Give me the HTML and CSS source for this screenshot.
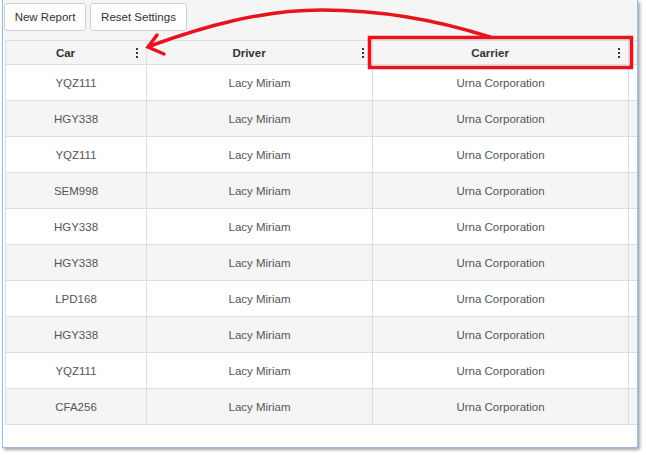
FILE: index.html
```html
<!DOCTYPE html>
<html>
<head>
<meta charset="utf-8">
<link rel="stylesheet" href="styles.css">
</head>
<body>
<div class="window">
  <div class="toolbar">
    <button class="btn">New Report</button>
    <button class="btn">Reset Settings</button>
  </div>
  <div class="grid">
    <div class="row head">
      <div class="hcell c1"><span class="htext">Car</span><span class="kebab"><i></i><i></i><i></i></span></div>
      <div class="hcell c2"><span class="htext">Driver</span><span class="kebab"><i></i><i></i><i></i></span></div>
      <div class="hcell c3"><span class="htext">Carrier</span><span class="kebab"><i></i><i></i><i></i></span></div>
      <div class="gutter"></div>
    </div>
    <div class="row"><div class="cell c1">YQZ111</div><div class="cell c2">Lacy Miriam</div><div class="cell c3">Urna Corporation</div><div class="gutter"></div></div>
    <div class="row alt"><div class="cell c1">HGY338</div><div class="cell c2">Lacy Miriam</div><div class="cell c3">Urna Corporation</div><div class="gutter"></div></div>
    <div class="row"><div class="cell c1">YQZ111</div><div class="cell c2">Lacy Miriam</div><div class="cell c3">Urna Corporation</div><div class="gutter"></div></div>
    <div class="row alt"><div class="cell c1">SEM998</div><div class="cell c2">Lacy Miriam</div><div class="cell c3">Urna Corporation</div><div class="gutter"></div></div>
    <div class="row"><div class="cell c1">HGY338</div><div class="cell c2">Lacy Miriam</div><div class="cell c3">Urna Corporation</div><div class="gutter"></div></div>
    <div class="row alt"><div class="cell c1">HGY338</div><div class="cell c2">Lacy Miriam</div><div class="cell c3">Urna Corporation</div><div class="gutter"></div></div>
    <div class="row"><div class="cell c1">LPD168</div><div class="cell c2">Lacy Miriam</div><div class="cell c3">Urna Corporation</div><div class="gutter"></div></div>
    <div class="row alt"><div class="cell c1">HGY338</div><div class="cell c2">Lacy Miriam</div><div class="cell c3">Urna Corporation</div><div class="gutter"></div></div>
    <div class="row"><div class="cell c1">YQZ111</div><div class="cell c2">Lacy Miriam</div><div class="cell c3">Urna Corporation</div><div class="gutter"></div></div>
    <div class="row alt"><div class="cell c1">CFA256</div><div class="cell c2">Lacy Miriam</div><div class="cell c3">Urna Corporation</div><div class="gutter"></div></div>
  </div>
</div>
<svg class="annot" width="646" height="455" viewBox="0 0 646 455">
  <rect x="369.5" y="37.5" width="262" height="30" fill="none" stroke="#e8131b" stroke-width="3.5"/>
  <path d="M490,37 C440,21 380,10 322,10 C262,10 205,26 150,46" fill="none" stroke="#e8131b" stroke-width="3.5" stroke-linecap="round"/>
  <path d="M157,35 L148,47 L164,54" fill="none" stroke="#e8131b" stroke-width="3.5" stroke-linecap="round" stroke-linejoin="miter"/>
</svg>
</body>
</html>
```
FILE: styles.css
```css
html, body {
  margin: 0;
  padding: 0;
  background: #ffffff;
}
body {
  width: 646px;
  height: 455px;
  position: relative;
  overflow: hidden;
  font-family: "Liberation Sans", Arial, sans-serif;
}
.window {
  margin-left: 2px;
  width: 634px;
  height: 447px;
  border: 1px solid #9dbde0;
  border-top: none;
  background: #ffffff;
  box-shadow: 2px 2px 3px rgba(0, 0, 0, 0.35);
  display: flex;
  flex-direction: column;
}
.toolbar {
  height: 40px;
  box-sizing: border-box;
  background: #f5f5f5;
  padding: 3px 0 0 1px;
  display: flex;
  gap: 4px;
  align-items: flex-start;
}
.btn {
  height: 28px;
  box-sizing: border-box;
  border: 1px solid #cfcfcf;
  border-radius: 3px;
  background: #ffffff;
  color: #333333;
  font-family: "Liberation Sans", Arial, sans-serif;
  font-size: 11.5px;
  padding: 0;
  margin: 0;
}
.btn:first-child { width: 82px; }
.btn:nth-child(2) { width: 97px; }
.grid {
  margin-left: 2px;
  border-left: 1px solid #dddddd;
  display: flex;
  flex-direction: column;
}
.row {
  display: flex;
  height: 36px;
  box-sizing: border-box;
  border-bottom: 1px solid #dddddd;
  background: #ffffff;
}
.row.alt { background: #f5f5f5; }
.row.head {
  height: 25px;
  background: #f5f5f5;
  border-top: 1px solid #dddddd;
}
.cell, .hcell {
  box-sizing: border-box;
  border-right: 1px solid #dddddd;
  display: flex;
  align-items: center;
  justify-content: center;
  font-size: 11.5px;
  color: #555555;
}
.c1 { width: 141px; }
.c2 { width: 226px; }
.c3 { width: 256px; }
.gutter { flex: 1; }
.hcell {
  position: relative;
  padding-right: 21px;
  font-weight: bold;
  color: #333333;
}
.kebab {
  position: absolute;
  right: 8px;
  top: 7px;
  display: flex;
  flex-direction: column;
  gap: 2px;
}
.kebab i {
  display: block;
  width: 2px;
  height: 2px;
  background: #333a44;
}
.annot {
  position: absolute;
  left: 0;
  top: 0;
  pointer-events: none;
}
```
